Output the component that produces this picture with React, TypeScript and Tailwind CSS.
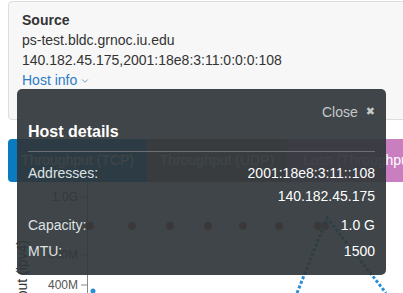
import { ChevronDown } from "lucide-react";

const dots = [90, 132, 170, 208, 243, 279, 318, 325];

function Chart() {
  return (
    <svg width={403} height={111} className="block">
      <line x1={87.5} y1={0} x2={87.5} y2={111} stroke="#888" strokeWidth={1} />
      {[
        ["1.0G", 15],
        ["800M", 44],
        ["600M", 73],
        ["400M", 103],
      ].map(([label, y]) => (
        <g key={label as string}>
          <line x1={81} y1={y as number} x2={87} y2={y as number} stroke="#888" />
          <text x={78} y={(y as number) + 4} textAnchor="end" fontSize={12} fill="#555">
            {label}
          </text>
        </g>
      ))}
      <text
        transform="translate(27,58) rotate(-90)"
        textAnchor="end"
        fontSize={14}
        fill="#333"
      >
        Throughput (ipv4)
      </text>
      {dots.map((x) => (
        <circle key={x} cx={x} cy={44} r={4} fill="#c9463d" />
      ))}
      <polyline
        points="297,111 327,36 386,111"
        fill="none"
        stroke="#2b8fd6"
        strokeWidth={3}
        strokeDasharray="3 2"
      />
      <circle cx={93} cy={109} r={2.5} fill="#2b8fd6" />
    </svg>
  );
}

export default function App() {
  return (
    <div className="relative h-[293px] w-[403px] overflow-hidden bg-white font-['Liberation_Sans',Arial,sans-serif] text-[14px] text-[#333]">
      {/* source panel */}
      <div className="ml-2 mt-px h-[119px] w-[430px] rounded border border-[#dddddd] bg-[#f7f7f7] px-[13px] pt-2 leading-5">
        <div className="font-bold">Source</div>
        <div>ps-test.bldc.grnoc.iu.edu</div>
        <div>140.182.45.175,2001:18e8:3:11:0:0:0:108</div>
        <div className="flex items-center gap-[3px] text-[#2f7bc4]">
          Host info
          <ChevronDown className="mt-[2px] h-[10px] w-[10px]" strokeWidth={1.75} />
        </div>
      </div>

      {/* tabs */}
      <div className="ml-2 mt-[19px] flex h-[43px] w-[440px] text-white">
        <div className="flex w-[139px] items-center justify-center rounded-l bg-[#0b7bc0]">
          Throughput (TCP)
        </div>
        <div className="flex w-[140px] items-center justify-center bg-[#9c8272]">
          Throughput (UDP)
        </div>
        <div className="flex w-[150px] items-center justify-start bg-[#c97ec0] pl-4">
          Loss (Throughput)
        </div>
      </div>

      <Chart />

      {/* host details popover */}
      <div className="absolute left-[17px] top-[89px] h-[186px] w-[369px] rounded-[5px] bg-[rgba(48,55,58,0.93)] px-[11px] pt-[13px] text-[#dfe2e3]">
        <div className="flex h-5 items-center justify-end text-[#c5c9cb]">
          <span>Close</span>
          <span className="ml-2 font-['DejaVu_Sans',sans-serif] text-[11px]">✖</span>
        </div>
        <div className="text-[16px] font-bold leading-5 text-white">Host details</div>
        <div className="mt-[9px] border-t border-[#6a7073]" />
        <div className="mt-[10px] flex justify-between leading-[23px]">
          <span>Addresses:</span>
          <div className="text-right text-white">
            <div>2001:18e8:3:11::108</div>
            <div>140.182.45.175</div>
          </div>
        </div>
        <div className="mt-[6px] flex justify-between leading-[23px]">
          <span>Capacity:</span>
          <span className="text-white">1.0 G</span>
        </div>
        <div className="mt-[3px] flex justify-between leading-[23px]">
          <span>MTU:</span>
          <span className="text-white">1500</span>
        </div>
      </div>
    </div>
  );
}
